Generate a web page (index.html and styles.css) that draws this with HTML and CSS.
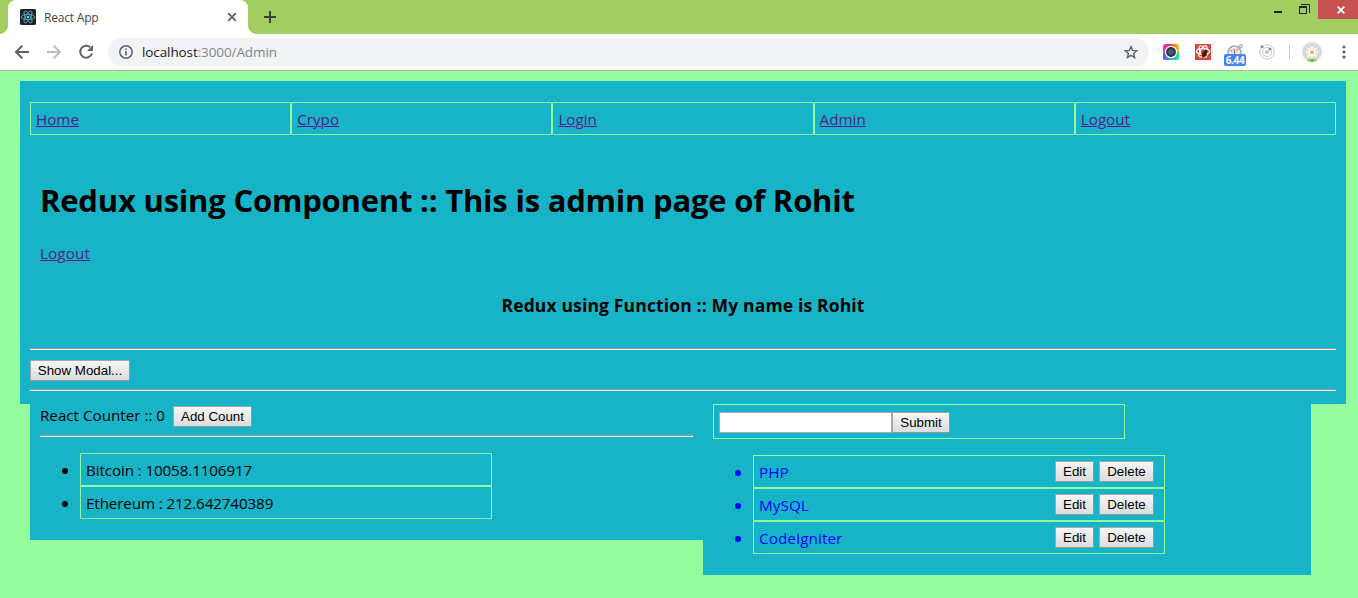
FILE: index.html
```html
<!DOCTYPE html>
<html lang="en">
<head>
<meta charset="utf-8">
<title>React App</title>
<link rel="stylesheet" href="styles.css">
</head>
<body>
<header class="browser">
  <div class="tabstrip">
    <div class="tab">
      <svg class="favicon" width="16" height="16" viewBox="0 0 16 16"><rect width="16" height="16" rx="1.5" fill="#222"/><g fill="none" stroke="#53b9d5" stroke-width=".8"><ellipse cx="8" cy="8" rx="6.7" ry="2.6"/><ellipse cx="8" cy="8" rx="6.7" ry="2.6" transform="rotate(60 8 8)"/><ellipse cx="8" cy="8" rx="6.7" ry="2.6" transform="rotate(120 8 8)"/></g><circle cx="8" cy="8" r="1.3" fill="#61dafb"/></svg>
      <span class="tab-title">React App</span>
      <svg class="tab-close" width="10" height="10" viewBox="0 0 10 10"><path d="M1.2 1.2l7.6 7.6M8.8 1.2L1.2 8.8" stroke="#5f6368" stroke-width="1.8"/></svg>
    </div>
    <svg class="new-tab" width="12" height="12" viewBox="0 0 12 12"><path d="M6 0v12M0 6h12" stroke="#3c4043" stroke-width="2"/></svg>
    <div class="window-controls">
      <svg width="60" height="19" viewBox="0 0 60 19"><path d="M16 11h8v2h-8z" fill="#222"/><path d="M43 4.5h8.5V13" fill="none" stroke="#222"/><path d="M41 6h8v8h-8zM42 8v5h6V8z" fill="#222" fill-rule="evenodd"/></svg>
      <div class="window-close"><svg width="8" height="8" viewBox="0 0 8 8"><path d="M.7.7l6.6 6.6M7.3.7L.7 7.3" stroke="#fff" stroke-width="1.9"/></svg></div>
    </div>
  </div>
  <div class="toolbar">
    <svg class="nav-icons" width="108" height="36" viewBox="0 0 108 36"><g fill="none" stroke-width="2"><path d="M29 18H16.5M22.3 11.7L16 18l6.3 6.3" stroke="#5f6368"/><path d="M47 18h12.500M53.700 11.700L60 18l-6.300 6.300" stroke="#babcbe"/><path d="M90.300 13.200A6 6 0 1 0 92 19.500" stroke="#5f6368"/></g><path d="M93 11v6h-6z" fill="#5f6368"/></svg>
    <div class="address">
      <svg width="14" height="14" viewBox="0 0 14 14"><circle cx="7" cy="7" r="6.200" fill="none" stroke="#5f6368" stroke-width="1.500"/><path d="M6.200 6h1.600v4.500H6.200zM6.200 3.500h1.600V5H6.200z" fill="#5f6368"/></svg>
      <span class="url">localhost<span class="path">:3000/Admin</span></span>
      <svg class="star" width="14" height="14" viewBox="0 0 14 14"><path d="M7 1.500l1.600 3.900 4.200.3-3.200 2.700 1 4.100L7 10.300l-3.600 2.200 1-4.100L1.200 5.700l4.200-.3z" fill="none" stroke="#5f6368" stroke-width="1.400"/></svg>
    </div>
    <div class="extensions">
      <svg width="16" height="16" viewBox="0 0 16 16"><defs><linearGradient id="warm" x2="1"><stop offset="0" stop-color="#f32bd0"/><stop offset=".45" stop-color="#f52d35"/><stop offset="1" stop-color="#f4cf16"/></linearGradient><linearGradient id="cool" x2="1"><stop offset="0" stop-color="#8a3cf5"/><stop offset=".5" stop-color="#16b8f2"/><stop offset="1" stop-color="#30df80"/></linearGradient></defs><rect width="16" height="16" rx="2.500" fill="url(#warm)"/><path d="M0 8h16v5.500a2.500 2.500 0 0 1-2.500 2.500h-11A2.500 2.500 0 0 1 0 13.500z" fill="url(#cool)"/><circle cx="8" cy="8" r="6.200" fill="#fff"/><circle cx="8" cy="8" r="4.900" fill="#253746"/><circle cx="8" cy="8" r="2.800" fill="#4e6070"/></svg>
      <svg width="16" height="16" viewBox="0 0 16 16"><rect width="16" height="16" fill="#d84837"/><g fill="none" stroke="#fff" stroke-width="1.200"><ellipse cx="8" cy="7.500" rx="6.500" ry="2.800"/><ellipse cx="8" cy="7.500" rx="6.300" ry="2.800" transform="rotate(60 8 7.500)"/><ellipse cx="8" cy="7.500" rx="6.300" ry="2.800" transform="rotate(120 8 7.500)"/></g><ellipse cx="9.300" cy="10" rx="2.200" ry="3.300" transform="rotate(30 9.300 10)" fill="#321"/><circle cx="10.800" cy="7" r="1.500" fill="#321"/><path d="M6 9l6 3M7 12.500l5-3" stroke="#321" stroke-width=".8"/></svg>
      <div class="meter"><svg width="16" height="16" viewBox="0 0 16 16"><circle cx="7.500" cy="8.500" r="6.500" fill="#ececec" stroke="#aaa" stroke-width="1.500"/><circle cx="13.800" cy="2" r="1.600" fill="#ddd" stroke="#aaa"/><path d="M3 6l2 1.500M11 5L9.500 7" stroke="#999" stroke-width="1.200"/><path d="M7 5l.6 5" stroke="#d33"/></svg><span class="meter-badge">6.44</span></div>
      <svg width="16" height="16" viewBox="0 0 16 16"><g fill="none" stroke="#c8c8c8"><circle cx="8" cy="8" r="7.200"/><circle cx="8" cy="8" r="4.500"/></g><circle cx="8" cy="8" r="2" fill="#c4c4c4"/><circle cx="3" cy="2.800" r="1.500" fill="#888"/><circle cx="11" cy="5" r="1.500" fill="#888"/></svg>
    </div>
    <div class="divider"></div>
    <svg class="avatar" width="20" height="20" viewBox="0 0 20 20"><circle cx="10" cy="10" r="10" fill="#dadada"/><path d="M4.500 18q5.500-2 11 0Q10 22 4.500 18z" fill="#80c346"/><path d="M10 11v8" stroke="#6ba63b"/><path d="M10 5.200v10M5 10.200h10M6.500 6.700l7 7M13.500 6.700l-7 7" stroke="#fff" stroke-width="2" stroke-linecap="round"/><circle cx="10" cy="10.200" r="2" fill="#f1bd35"/></svg>
    <svg class="menu" width="4" height="14" viewBox="0 0 4 14"><g fill="#5f6368"><circle cx="2" cy="2" r="1.600"/><circle cx="2" cy="7" r="1.600"/><circle cx="2" cy="12" r="1.600"/></g></svg>
  </div>
</header>
<main class="page">
  <section class="top">
    <nav class="links"><a href="#">Home</a><a href="#">Crypo</a><a href="#">Login</a><a href="#">Admin</a><a href="#">Logout</a></nav>
    <div class="intro">
      <h1>Redux using Component :: This is admin page of Rohit</h1>
      <a href="#">Logout</a>
    </div>
    <h3>Redux using Function :: My name is Rohit</h3>
    <div class="rule"></div>
    <button class="btn modal-btn">Show Modal...</button>
    <div class="rule"></div>
  </section>
  <section class="panels">
    <div class="panel counter">
      <div class="count-row"><span>React Counter :: 0</span><button class="btn add-btn">Add Count</button></div>
      <div class="rule"></div>
      <ul class="list coins">
        <li><span>Bitcoin : 10058.1106917</span></li>
        <li><span>Ethereum : 212.642740389</span></li>
      </ul>
    </div>
    <div class="panel skills">
      <form class="box-form"><input type="text" aria-label="Skill"><button type="button" class="btn submit-btn">Submit</button></form>
      <ul class="list blue">
        <li><span>PHP</span><button class="btn edit-btn">Edit</button><button class="btn delete-btn">Delete</button></li>
        <li><span>MySQL</span><button class="btn edit-btn">Edit</button><button class="btn delete-btn">Delete</button></li>
        <li><span>CodeIgniter</span><button class="btn edit-btn">Edit</button><button class="btn delete-btn">Delete</button></li>
      </ul>
    </div>
  </section>
</main>
</body>
</html>
```
FILE: styles.css
```css
* { box-sizing: border-box; }
body { margin: 0; height: 598px; overflow: hidden; background: #94fc9c; font: 15.2px/21px "Open Sans", sans-serif; color: #000; }
svg { display: block; flex: none; }

.tabstrip { display: flex; height: 34px; background: #a2ce61; padding-left: 8px; }
.tab { position: relative; display: flex; align-items: center; width: 240px; height: 34px; padding: 0 11px 0 12px; background: #fff; border-radius: 8px 8px 0 0; font-size: 12px; color: #45484c; }
.tab::before, .tab::after { content: ""; position: absolute; bottom: 0; width: 8px; height: 8px; }
.tab::before { left: -8px; background: radial-gradient(circle at 0 0, #a2ce61 7.5px, #fff 8px); }
.tab::after { right: -8px; background: radial-gradient(circle at 100% 0, #a2ce61 7.5px, #fff 8px); }
.tab-title { margin-left: 8px; flex: 1; letter-spacing: -.2px; }
.new-tab { margin: 11px 0 0 16px; }
.window-controls { display: flex; margin-left: auto; }
.window-close { display: flex; align-items: center; justify-content: center; width: 40px; height: 19px; padding-left: 6px; background: #c75050; }

.toolbar { display: flex; align-items: center; height: 37px; background: #fff; border-bottom: 1px solid #b6b4b6; }
.address { display: flex; align-items: center; width: 1041px; height: 28px; padding: 0 11px; border-radius: 14px; background: #f1f3f4; }
.url { margin-left: 9px; flex: 1; font-size: 13.5px; letter-spacing: -.1px; color: #202124; }
.path { color: #80868b; }
.extensions { display: flex; gap: 16px; margin-left: 14px; }
.meter { position: relative; }
.meter-badge { position: absolute; left: -3px; top: 10px; width: 22px; height: 12px; border-radius: 2px; background: #4285f4; color: #fff; font-weight: 700; font-size: 10px; line-height: 12px; letter-spacing: -.4px; text-align: center; }
.divider { width: 1px; height: 16px; margin: 0 12px 0 14px; background: #ccc; }
.menu { margin-left: 20px; }

.page { padding: 10px 12px 0 20px; }
.top { height: 323px; padding: 21px 10px 0; background: #17b4c7; }
a { color: #551a8b; text-underline-offset: 1px; text-decoration-thickness: 1px; }
.links { display: flex; height: 33px; }
.links a { flex: 1; padding: 6px 5px; border: 1px solid #94fc9c; }
.intro { height: 162px; padding: 44px 10px 0; }
h1 { margin: 0 0 21px; font-size: 31px; line-height: 43px; letter-spacing: -.21px; white-space: nowrap; }
.intro a { display: inline-block; letter-spacing: .15px; }
h3 { height: 51px; margin: 0; font-size: 17.5px; line-height: 17px; letter-spacing: .15px; text-align: center; }
.rule { height: 2px; border-top: 1px solid #9a9a9a; border-bottom: 1px solid #eee; }
.btn { height: 21px; padding: 0; border: 1px solid #a6a6a6; border-right-color: #979797; border-bottom-color: #979797; border-radius: 0; background: linear-gradient(#f6f6f6, #dcdcdc); font: 13.33px/17px "Liberation Sans", sans-serif; color: #000; white-space: nowrap; flex: none; }
.modal-btn { display: block; width: 100px; margin: 10px 0 8px; }
.panels { display: flex; align-items: flex-start; padding-left: 10px; }
.panel { background: #17b4c7; padding: 0 10px; }
.counter { width: 673px; height: 136px; }
.skills { width: 608px; height: 171px; }
.count-row { display: flex; height: 31px; }
.count-row span { width: 133px; padding-top: 1px; white-space: nowrap; }
.add-btn { width: 79px; margin-top: 2px; }
.list { margin: 16px 0 0; padding: 0 0 0 40px; list-style: none; }
.list li { position: relative; display: flex; width: 412px; height: 33px; padding: 5px; border: 1px solid #94fc9c; }
.list li::before { content: ""; position: absolute; left: -19px; top: 14px; width: 6px; height: 6px; border-radius: 50%; background: currentColor; }
.list span { flex: 1; padding-top: 1px; white-space: nowrap; }
.coins { letter-spacing: -.11px; }
.blue { color: #00f; letter-spacing: .1px; }
.edit-btn { width: 39px; }
.delete-btn { width: 55px; margin: 0 5px; }
.box-form { display: flex; width: 412px; height: 35px; padding: 7px 5px; border: 1px solid #94fc9c; }
input { width: 173px; height: 21px; padding: 1px; border: 1px solid #a9a9a9; background: #fff; }
.submit-btn { width: 58px; }
```
